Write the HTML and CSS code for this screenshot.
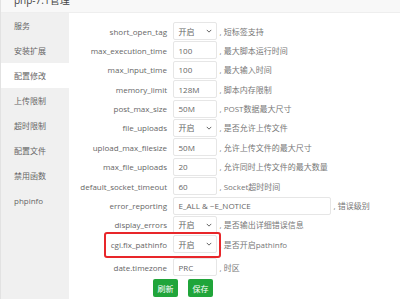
FILE: index.html
```html
<!DOCTYPE html>
<html>
<head>
  <meta charset="UTF-8">
  <title>php-7.1管理</title>
  <link rel="stylesheet" href="styles.css">
</head>
<body>
  <div class="layer">
    <div class="layer-title">php-7.1管理</div>
    <div class="layer-body">
      <ul class="side-menu">
        <li>服务</li>
        <li>安装扩展</li>
        <li class="active">配置修改</li>
        <li>上传限制</li>
        <li>超时限制</li>
        <li>配置文件</li>
        <li>禁用函数</li>
        <li>phpinfo</li>
      </ul>

      <div class="conf-panel">
        <div class="conf-row">
          <span class="conf-name">short_open_tag</span>
          <div class="conf-select">开启<svg viewBox="0 0 8 5"><polyline points="1,1 4,4 7,1"/></svg></div>
          <span class="conf-ps">, 短标签支持</span>
        </div>
        <div class="conf-row">
          <span class="conf-name">max_execution_time</span>
          <div class="conf-input">100</div>
          <span class="conf-ps">, 最大脚本运行时间</span>
        </div>
        <div class="conf-row">
          <span class="conf-name">max_input_time</span>
          <div class="conf-input">100</div>
          <span class="conf-ps">, 最大输入时间</span>
        </div>
        <div class="conf-row">
          <span class="conf-name">memory_limit</span>
          <div class="conf-input">128M</div>
          <span class="conf-ps">, 脚本内存限制</span>
        </div>
        <div class="conf-row">
          <span class="conf-name">post_max_size</span>
          <div class="conf-input">50M</div>
          <span class="conf-ps">, POST数据最大尺寸</span>
        </div>
        <div class="conf-row">
          <span class="conf-name">file_uploads</span>
          <div class="conf-select">开启<svg viewBox="0 0 8 5"><polyline points="1,1 4,4 7,1"/></svg></div>
          <span class="conf-ps">, 是否允许上传文件</span>
        </div>
        <div class="conf-row">
          <span class="conf-name">upload_max_filesize</span>
          <div class="conf-input">50M</div>
          <span class="conf-ps">, 允许上传文件的最大尺寸</span>
        </div>
        <div class="conf-row">
          <span class="conf-name">max_file_uploads</span>
          <div class="conf-input">20</div>
          <span class="conf-ps">, 允许同时上传文件的最大数量</span>
        </div>
        <div class="conf-row">
          <span class="conf-name">default_socket_timeout</span>
          <div class="conf-input">60</div>
          <span class="conf-ps">, Socket超时时间</span>
        </div>
        <div class="conf-row">
          <span class="conf-name">error_reporting</span>
          <div class="conf-input wide">E_ALL &amp; ~E_NOTICE</div>
          <span class="conf-ps">, 错误级别</span>
        </div>
        <div class="conf-row">
          <span class="conf-name">display_errors</span>
          <div class="conf-select">开启<svg viewBox="0 0 8 5"><polyline points="1,1 4,4 7,1"/></svg></div>
          <span class="conf-ps">, 是否输出详细错误信息</span>
        </div>
        <div class="conf-row marked">
          <span class="conf-name">cgi.fix_pathinfo</span>
          <div class="conf-select">开启<svg viewBox="0 0 8 5"><polyline points="1,1 4,4 7,1"/></svg></div>
          <span class="conf-ps">, 是否开启pathinfo</span>
        </div>
        <div class="conf-row">
          <span class="conf-name">date.timezone</span>
          <div class="conf-input">PRC</div>
          <span class="conf-ps">, 时区</span>
        </div>
        <div class="conf-btns">
          <button class="btn-green">刷新</button>
          <button class="btn-green">保存</button>
        </div>
      </div>
    </div>
    <!-- 标注框 -->
    <div class="mark-box"></div>
  </div>
</body>
</html>
```

FILE: styles.css
```css
/* 弹层整体 */
body {
  margin: 0;
  font-family: "Open Sans", "Noto Sans CJK SC", sans-serif;
  font-size: 8px;
  color: #666;
  background: #fff;
}

.layer {
  position: relative;
  width: 400px;
  height: 299px;
  overflow: hidden;
  border-left: 1px solid #e2e2e2;
  box-sizing: border-box;
}

.layer-title {
  height: 13px;
  line-height: 10px;
  padding-left: 13px;
  font-size: 10px;
  color: #444;
  background-color: #f8f8f8;
  border-bottom: 1px solid #eee;
  box-sizing: border-box;
  overflow: hidden;
}

.layer-title::before {
  content: "";
  display: block;
  margin-top: -5px;
}

.layer-body {
  display: flex;
  height: 286px;
}

/* 左侧菜单 */
.side-menu {
  list-style-type: none;
  margin: 0;
  padding: 0;
  width: 68px;
  background-color: #f0f0f0;
  flex-shrink: 0;
}

.side-menu li {
  height: 25px;
  line-height: 25px;
  padding-left: 13px;
  color: #666;
}

.side-menu li.active {
  background-color: #fff;
}

/* 配置表单 */
.conf-panel {
  flex: 1;
  padding-top: 9px;
}

.conf-row {
  display: flex;
  align-items: center;
  height: 18px;
  margin-bottom: 1.4px;
}

.conf-row.marked {
  margin-bottom: 5px;
}

.conf-name {
  width: 98px;
  text-align: right;
  color: #666;
  white-space: nowrap;
}

.conf-input,
.conf-select {
  display: flex;
  align-items: center;
  justify-content: space-between;
  width: 44px;
  height: 18px;
  margin-left: 5.5px;
  padding: 0 4px 0 5px;
  border: 1px solid #e6e6e6;
  border-radius: 2px;
  box-sizing: border-box;
  color: #666;
  background: #fff;
}

.conf-input.wide {
  width: 158px;
}

.conf-select svg {
  width: 6px;
  height: 4px;
  fill: none;
  stroke: #555;
  stroke-width: 1.2;
}

.conf-ps {
  margin-left: 3px;
  color: #777;
}

.conf-btns {
  display: flex;
  gap: 10px;
  padding-left: 84px;
  margin-top: 3px;
}

.btn-green {
  width: 25px;
  height: 18px;
  padding: 0;
  border: none;
  border-radius: 2px;
  background-color: #20a53a;
  color: #fff;
  font-family: inherit;
  font-size: 8px;
}

/* 红色标注 */
.mark-box {
  position: absolute;
  left: 103px;
  top: 232px;
  width: 117px;
  height: 26px;
  border: 2px solid #e8262a;
  border-radius: 3px;
  box-sizing: border-box;
}
```
